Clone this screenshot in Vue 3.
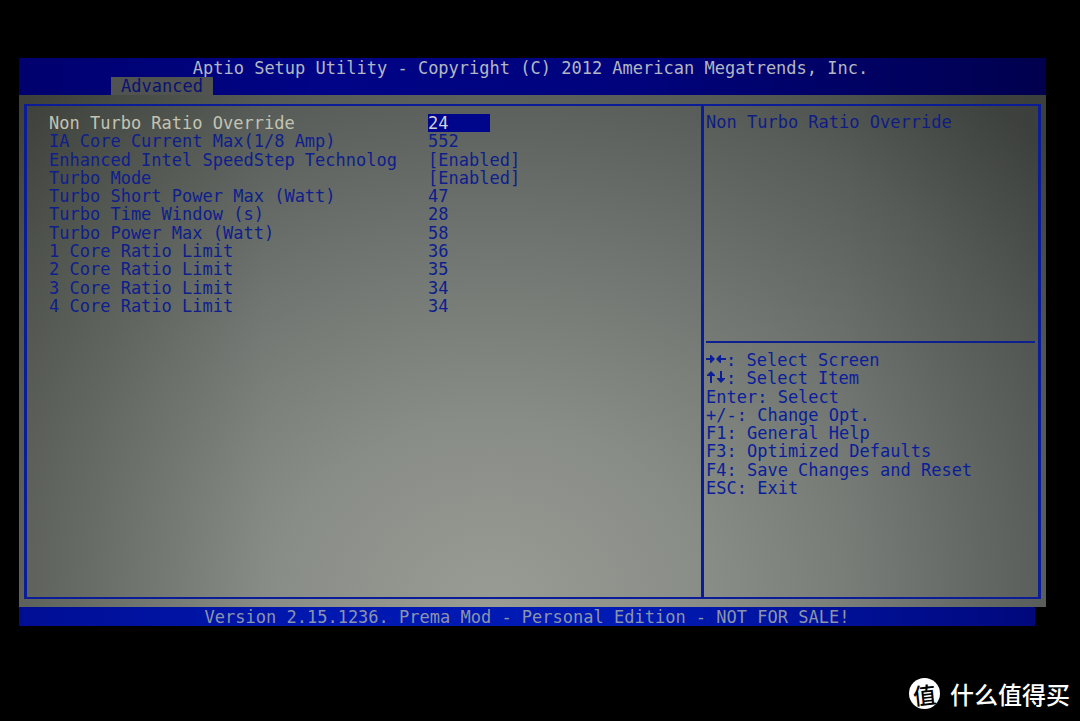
<script setup>
import { ref } from 'vue'

const settings = ref([
  { id: 'non-turbo', label: 'Non Turbo Ratio Override', value: '24', active: true },
  { id: 'ia-current', label: 'IA Core Current Max(1/8 Amp)', value: '552' },
  { id: 'speedstep', label: 'Enhanced Intel SpeedStep Technolog', value: '[Enabled]', toggle: true },
  { id: 'turbo-mode', label: 'Turbo Mode', value: '[Enabled]', toggle: true },
  { id: 'short-power', label: 'Turbo Short Power Max (Watt)', value: '47' },
  { id: 'time-window', label: 'Turbo Time Window (s)', value: '28' },
  { id: 'power-max', label: 'Turbo Power Max (Watt)', value: '58' },
  { id: 'core-1', label: '1 Core Ratio Limit', value: '36' },
  { id: 'core-2', label: '2 Core Ratio Limit', value: '35' },
  { id: 'core-3', label: '3 Core Ratio Limit', value: '34' },
  { id: 'core-4', label: '4 Core Ratio Limit', value: '34' },
])

const keys = [
  { icon: 'horizontal', text: ': Select Screen' },
  { icon: 'vertical', text: ': Select Item' },
  { text: 'Enter: Select' },
  { text: '+/-: Change Opt.' },
  { text: 'F1: General Help' },
  { text: 'F3: Optimized Defaults' },
  { text: 'F4: Save Changes and Reset' },
  { text: 'ESC: Exit' },
]
</script>

<template>
  <div class="page">
    <div class="screen">
      <header class="top">
        <h1 class="title">Aptio Setup Utility - Copyright (C) 2012 American Megatrends, Inc.</h1>
        <nav class="tabs"><button type="button" class="tab">Advanced</button></nav>
      </header>

      <main class="body">
        <div class="frame">
          <section class="settings">
            <div v-for="s in settings" :key="s.id" class="row" :class="{ active: s.active }">
              <label class="label" :for="s.id">{{ s.label }}</label>
              <select v-if="s.toggle" :id="s.id" v-model="s.value" class="value choice">
                <option>[Enabled]</option>
                <option>[Disabled]</option>
              </select>
              <input v-else :id="s.id" v-model="s.value" class="value number" type="text" />
            </div>
          </section>

          <aside class="side">
            <p class="help">Non Turbo Ratio Override</p>
            <ul class="keys">
              <li v-for="k in keys" :key="k.text" class="key">
                <svg v-if="k.icon === 'horizontal'" class="arrows" viewBox="0 0 20 18" aria-hidden="true">
                  <path d="M0 7h4V4h1l4 4-4 4H4V9H0zM20 7h-5V4h-1l-4 4 4 4h1V9h5z" />
                </svg>
                <svg v-else-if="k.icon === 'vertical'" class="arrows" viewBox="0 0 20 18" aria-hidden="true">
                  <path d="M5 2l4 4v1H6v7H4V7H1V6zM14 2h2v7h3v1l-4 4-4-4V9h3z" />
                </svg>
                <span>{{ k.text }}</span>
              </li>
            </ul>
          </aside>
        </div>
      </main>

      <footer class="version">Version 2.15.1236. Prema Mod - Personal Edition - NOT FOR SALE!</footer>
    </div>

    <div class="brand">
      <span class="badge"><span class="seal">值</span></span>
      <span class="name">什么值得买</span>
    </div>
  </div>
</template>

<style>
body {
  margin: 0;
  background: #000;
}
</style>

<style scoped>
.page {
  box-sizing: border-box;
  min-height: 100vh;
  display: flex;
  flex-direction: column;
  padding: 58px 34px 12px 19px;
  background: #000;
  font: 17px/18px "DejaVu Sans Mono", "Liberation Mono", monospace;
}

.screen {
  display: flex;
  flex-direction: column;
  min-height: 568px;
}

.top {
  background: linear-gradient(90deg, #00006e, #000486 30%, #00037c 60%, #00004e);
}

.title {
  margin: 0;
  padding: 1px 4px 0 0;
  font: inherit;
  text-align: center;
  white-space: nowrap;
  color: #b3b7c1;
}

.tabs {
  display: flex;
  padding-left: 92px;
}

.tab {
  padding: 0 10px;
  border: 0;
  background: #50534f;
  color: #0a1272;
  font: inherit;
}

.body {
  flex: 1;
  display: flex;
  padding: 9px 5px 8px;
  background:
    linear-gradient(90deg, rgba(30, 30, 10, 0.18), transparent 24%, transparent 80%, rgba(0, 0, 0, 0.08)),
    radial-gradient(ellipse 780px 660px at 46% 100%, #999c94, #898d87 28%, #6f7470 56%, #585d59 80%, #414541);
}

.frame {
  flex: 1;
  display: grid;
  grid-template-columns: 2fr 1fr;
  border: solid #0a1c98;
  border-width: 2px 3px;
}

.settings {
  display: grid;
  align-content: start;
  grid-auto-rows: 1fr;
  height: 201px;
  padding: 8px 0 0 22px;
}

.row {
  display: grid;
  grid-template-columns: 379px 1fr;
  align-items: center;
  color: #0e1e8c;
}

.label {
  white-space: nowrap;
}

.value {
  box-sizing: border-box;
  height: 18px;
  margin: 0;
  padding: 0;
  border: 0;
  border-radius: 0;
  background: transparent;
  color: inherit;
  font: inherit;
  appearance: none;
  outline: 0;
}

.number {
  width: 62px;
}

.choice {
  width: 104px;
}

.active {
  color: #c3c3b2;
}

.active .value {
  background: #00068c;
  color: #d0d2d4;
}

.side {
  display: flex;
  flex-direction: column;
  padding: 7px 3px 0 2px;
  border-left: 3px solid #0a1c98;
}

.help {
  min-height: 228px;
  margin: 0;
  color: #0e1c84;
}

.keys {
  display: grid;
  grid-auto-rows: 1fr;
  height: 146px;
  margin: 0;
  padding: 8px 0 0;
  border-top: 2px solid #0c2090;
  list-style: none;
  color: #0a1e9a;
}

.key {
  display: flex;
  align-items: center;
  white-space: nowrap;
}

.arrows {
  width: 20px;
  height: 18px;
  fill: currentColor;
}

.version {
  margin-right: 11px;
  padding-top: 1px;
  text-align: center;
  white-space: nowrap;
  color: #8c93ac;
  background: linear-gradient(90deg, #000e94, #0018b0 30%, #001ab4 60%, #00087c);
}

.brand {
  display: flex;
  align-items: center;
  justify-content: flex-end;
  gap: 10px;
  margin: auto -24px 0 0;
  color: #fff;
  font-family: "Noto Sans CJK SC", sans-serif;
}

.badge {
  display: flex;
  align-items: center;
  justify-content: center;
  width: 31px;
  height: 31px;
  border-radius: 50%;
  background: #fff;
  color: #000;
}

.seal {
  font-size: 23px;
  font-weight: 500;
  transform: rotate(-6deg);
}

.name {
  font-size: 24px;
  font-weight: 500;
  line-height: 31px;
}
</style>
